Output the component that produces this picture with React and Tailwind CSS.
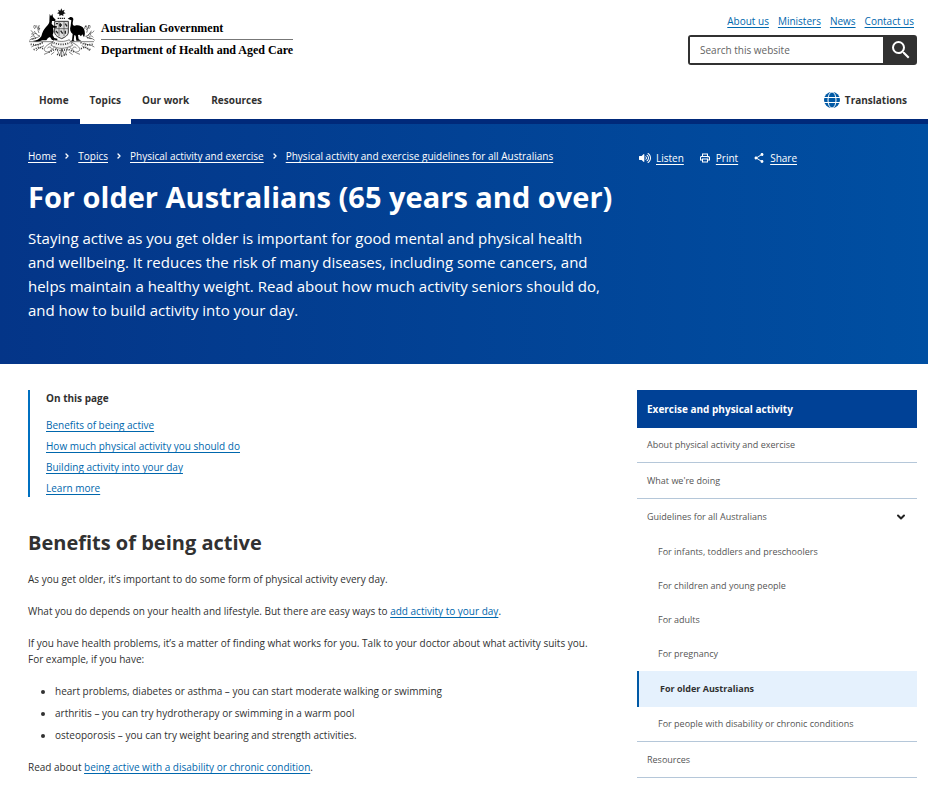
import React, { useState } from 'react';
import { FaVolumeUp } from 'react-icons/fa';
import { MdSearch, MdShare, MdOutlinePrint } from 'react-icons/md';
import { ChevronDown, ChevronRight } from 'lucide-react';

const topLinks = ['About us', 'Ministers', 'News', 'Contact us'];

const navItems = ['Home', 'Topics', 'Our work', 'Resources'];

const breadcrumbs = [
  'Home',
  'Topics',
  'Physical activity and exercise',
  'Physical activity and exercise guidelines for all Australians',
];

const pageSections = [
  'Benefits of being active',
  'How much physical activity you should do',
  'Building activity into your day',
  'Learn more',
];

const guidelines = [
  'For infants, toddlers and preschoolers',
  'For children and young people',
  'For adults',
  'For pregnancy',
  'For older Australians',
  'For people with disability or chronic conditions',
];

const currentPage = 'For older Australians';

function CoatOfArms() {
  return (
    <svg viewBox="12 10 204 150" className="h-[50px] w-[68px] shrink-0" aria-hidden="true">
      {/* star and wreath */}
      <path d="M112 11l3 7 7-3-3 7 6 4-7 2 0 6-6-3-6 3 0-6-7-2 6-4-3-7 7 3z" fill="#111" />
      <path d="M101 41h23" stroke="#222" strokeWidth="4" strokeDasharray="4 2" />
      {/* shield */}
      <path d="M92 50h41v32c0 10-9 15-20 20-12-5-21-10-21-20z" fill="#ddd" stroke="#333" strokeWidth="3" />
      <path d="M105 50v44M120 50v44M92 72h41" stroke="#444" strokeWidth="2" />
      <path d="M96 57h6M109 56v11M105 61h9M124 57l5 8M96 79l6 7M110 78l6 9M124 78v9" stroke="#222" strokeWidth="4" />
      {/* kangaroo */}
      <path
        d="M77 28l4 7 4-8 2 10 8 8-2 4-9 0-1 9 7 6 9 1-1 4-11 0 2 12-3 10 5 9 9 2v4H84l-6-9-6 3-5 7H55c-10 5-21 5-29 2 11 0 20-5 26-14 3-12 7-21 14-28 5-6 9-9 10-15z"
        fill="#000"
      />
      {/* emu */}
      <path
        d="M131 42l8-5c6-1 9 3 9 7l-2 11c0 6 2 9 7 8 10-3 22 1 27 10 4 8 3 19 0 25l-5-9-4 6-5-5-4 1 2 13 8 4h-15l-2-15-4-2-2 16 4 3h-14l5-3 2-19c-7-6-10-14-6-25l2-16z"
        fill="#000"
      />
      {/* wattle on both sides */}
      <g fill="none" stroke="#444" strokeWidth="2">
        <path d="M16 107c8-9 22-4 32-13-9-2-14-8-17-15m7 8c-8 0-14-4-17-10m24 8c-5-9-3-17 1-24m1 15c-8-4-9-10-9-14" />
        <path d="M212 107c-8-9-18-4-27-12 8-2 14-8 17-17m-7 8c8 0 13-3 15-8m-22 6c4-8 2-16-3-23m1 14c7-4 9-8 8-14" />
        <path d="M20 98c5-6 10-5 14 0m-2-26c-4-4-3-8 0-11 4 4 4 7 0 11m176 26c-6-6-10-5-14 0m1-26c5-4 4-8 1-11-4 4-4 7-1 11" />
        <path d="M23 87l9 5m-9 12l13-4m8-34l3 8m153 14l-10 5m12 9l-13-3m-4-35l-4 9" strokeWidth="4" strokeDasharray="3 2" />
      </g>
      {/* scroll and lower branches */}
      <g fill="none" stroke="#444" strokeWidth="2">
        <path d="M15 111h73l-13 7c-12 8-18 15-12 21s18 1 19-6-9-8-12-2m140-20h-70l13 7c12 8 18 15 12 21s-18 1-19-6 9-8 12-2" />
        <path d="M90 105c16 7 31 7 46 0l10 17c-24 12-43 12-65 0zM92 126c-9 12-21 20-32 23m76-23c9 12 21 20 32 23" fill="#f4f4f4" />
        <path d="M22 127c11-8 20-5 31-12M36 139c7-11 17-11 24-16M211 127c-11-8-20-5-31-12m17 24c-7-11-17-11-24-16" />
        <path d="M97 130l10 22 7-20 8 20 9-23M113 132v24m-22-14l-10 8m54-8l11 8" />
      </g>
      <g fill="none" stroke="#333" strokeWidth="5" strokeDasharray="3 4">
        <path d="M20 119l20 2 18-8M29 135l16-8 14 6M206 119l-20 2-18-8m31 22l-16-8-14 6" />
        <path d="M89 114c17 7 32 7 49 0M74 143l18-9 20 4 20-4 21 9" />
        <path d="M99 149l14 5 15-5" />
      </g>
    </svg>
  );
}

function GlobeIcon() {
  return (
    <svg viewBox="0 0 16 16" className="size-4" aria-hidden="true">
      <circle cx="8" cy="8" r="8" fill="#0059a5" />
      <g fill="none" stroke="#fff" strokeWidth="1">
        <ellipse cx="8" cy="8" rx="4" ry="8" />
        <path d="M0 5.5h16M0 10.5h16" />
      </g>
    </svg>
  );
}

function Header() {
  const [query, setQuery] = useState('');

  return (
    <header className="border-b-5 border-[#00297a]">
      <div className="flex items-start justify-between pl-7 pr-[11px]">
        <a href="#home" className="flex items-start gap-[5px] pt-2 text-black">
          <CoatOfArms />
          <span className="flex flex-col pt-3 font-['Liberation_Serif',serif] text-[12px] leading-4 font-bold">
            <span className="border-b border-[#777] pb-[3px]">Australian Government</span>
            <span className="pt-0.5">Department of Health and Aged Care</span>
          </span>
        </a>
        <div className="w-[229px] pt-3">
          <ul className="flex justify-end gap-[9px] pr-[3px] text-[10px] leading-[18px]">
            {topLinks.map((link) => (
              <li key={link}>
                <a href="#top" className="text-[#0067ad] underline underline-offset-2">{link}</a>
              </li>
            ))}
          </ul>
          <form className="mt-[5px] flex h-[30px] rounded-[3px] border-2 border-[#313131] bg-[#313131]" onSubmit={(e) => e.preventDefault()}>
            <input
              type="text"
              aria-label="Search this website"
              placeholder="Search this website"
              value={query}
              onChange={(e) => setQuery(e.target.value)}
              className="min-w-0 flex-1 bg-white px-2.5 text-[10px] text-[#313131] placeholder:text-[#636363] focus:outline-none"
            />
            <button type="submit" aria-label="Search" className="flex w-8 items-center justify-center pl-1 text-white">
              <MdSearch className="size-6" />
            </button>
          </form>
        </div>
      </div>

      <nav className="mt-3 flex items-center justify-between pl-7 pr-[11px] text-[10px] font-bold">
        <ul className="flex h-[42px]">
          {navItems.map((item) => (
            <li key={item}>
              <a
                href="#nav"
                className={
                  item === 'Topics'
                    ? 'relative block h-[47px] bg-white px-2.5 leading-[46px]'
                    : 'block px-[11px] leading-[46px]'
                }
              >
                {item}
              </a>
            </li>
          ))}
        </ul>
        <a href="#translations" className="flex items-center gap-[5px] pt-1 pr-2.5">
          <GlobeIcon />
          Translations
        </a>
      </nav>
    </header>
  );
}

function Hero() {
  return (
    <section className="flex min-h-60 gap-[30px] bg-linear-to-r from-[#043588] to-[#004fa2] pt-6 pb-10 pl-7 pr-[11px] text-white">
      <div className="min-w-0 flex-1">
        <ol className="flex text-[10px] leading-4 whitespace-nowrap">
          {breadcrumbs.map((crumb, i) => (
            <li key={crumb} className="flex items-center">
              {i > 0 && <ChevronRight className="mx-[7px] size-2" strokeWidth={4} />}
              <a href="#crumb" className="underline underline-offset-2">{crumb}</a>
            </li>
          ))}
        </ol>
        <h1 className="mt-3 text-[29px] leading-[42px] font-bold whitespace-nowrap">
          For older Australians (65 years and over)
        </h1>
        <p className="mt-2 text-[15px] leading-6">
          Staying active as you get older is important for good mental and physical health
          and wellbeing. It reduces the risk of many diseases, including some cancers, and
          helps maintain a healthy weight. Read about how much activity seniors should do,
          and how to build activity into your day.
        </p>
      </div>
      <ul className="flex w-[278px] shrink-0 gap-[15px] pt-0.5 text-[10px] leading-4">
        <li className="flex h-4 items-center gap-[5px]">
          <FaVolumeUp className="size-3" />
          <a href="#listen" className="underline underline-offset-2">Listen</a>
        </li>
        <li className="flex h-4 items-center gap-[5px]">
          <MdOutlinePrint className="size-3" />
          <a href="#print" className="underline underline-offset-2">Print</a>
        </li>
        <li className="flex h-4 items-center gap-[5px]">
          <MdShare className="size-3" />
          <a href="#share" className="underline underline-offset-2">Share</a>
        </li>
      </ul>
    </section>
  );
}

function Article() {
  return (
    <main className="min-w-0 flex-1 pr-3 text-[10px] leading-4">
      <nav className="border-l-2 border-[#0070c0] pb-px pl-4">
        <h2 className="font-bold">On this page</h2>
        <ul className="mt-[11px] flex flex-col gap-[5px]">
          {pageSections.map((section) => (
            <li key={section}>
              <a href="#section" className="text-[#0067ad] underline underline-offset-2">{section}</a>
            </li>
          ))}
        </ul>
      </nav>
      <h2 className="mt-8 text-[20px] leading-7 font-bold">Benefits of being active</h2>
      <div className="mt-3.5 flex flex-col gap-4">
        <p>As you get older, it’s important to do some form of physical activity every day.</p>
        <p>
          What you do depends on your health and lifestyle. But there are easy ways to{' '}
          <a href="#add" className="text-[#0067ad] underline underline-offset-2">add activity to your day</a>.
        </p>
        <p>
          If you have health problems, it’s a matter of finding what works for you. Talk to your doctor about what activity suits you.
          For example, if you have:
        </p>
        <ul className="flex list-disc flex-col gap-[6px] pl-[27px]">
          <li>heart problems, diabetes or asthma – you can start moderate walking or swimming</li>
          <li>arthritis – you can try hydrotherapy or swimming in a warm pool</li>
          <li>osteoporosis – you can try weight bearing and strength activities.</li>
        </ul>
        <p>
          Read about{' '}
          <a href="#disability" className="text-[#0067ad] underline underline-offset-2">being active with a disability or chronic condition</a>.
        </p>
      </div>
    </main>
  );
}

function Sidebar() {
  const [open, setOpen] = useState(true);

  return (
    <aside className="w-[280px] shrink-0 text-[9px] text-[#555]">
      <h2 className="bg-[#004196] px-2.5 text-[10px] leading-[38px] font-bold text-white">
        Exercise and physical activity
      </h2>
      <ul>
        <li className="border-b border-[#b5c7d9]">
          <a href="#about" className="block px-2.5 leading-[34px]">About physical activity and exercise</a>
        </li>
        <li className="border-b border-[#b5c7d9]">
          <a href="#doing" className="block px-2.5 leading-[35px]">What we're doing</a>
        </li>
        <li className="border-b border-[#b5c7d9]">
          <div className="flex items-center justify-between px-2.5 leading-9">
            <a href="#guidelines">Guidelines for all Australians</a>
            <button type="button" aria-label="Toggle guidelines" onClick={() => setOpen(!open)} className="text-[#222]">
              <ChevronDown className="size-3" strokeWidth={4} />
            </button>
          </div>
          {open && (
            <ul>
              {guidelines.map((item) => (
                <li key={item}>
                  <a
                    href="#guideline"
                    className={
                      item === currentPage
                        ? 'block border-l-2 border-[#0059a5] bg-[#e5f1fd] pl-[21px] leading-9 font-bold text-[#313131]'
                        : 'block pl-[21px] leading-[34px]'
                    }
                  >
                    {item}
                  </a>
                </li>
              ))}
            </ul>
          )}
        </li>
        <li className="border-b border-[#b5c7d9]">
          <a href="#resources" className="block px-2.5 leading-[35px]">Resources</a>
        </li>
      </ul>
    </aside>
  );
}

export default function App() {
  return (
    <div className="bg-white font-['Open_Sans',sans-serif] text-[#313131]">
      <Header />
      <Hero />
      <div className="flex gap-[30px] pt-[26px] pl-7 pr-[11px]">
        <Article />
        <Sidebar />
      </div>
    </div>
  );
}
